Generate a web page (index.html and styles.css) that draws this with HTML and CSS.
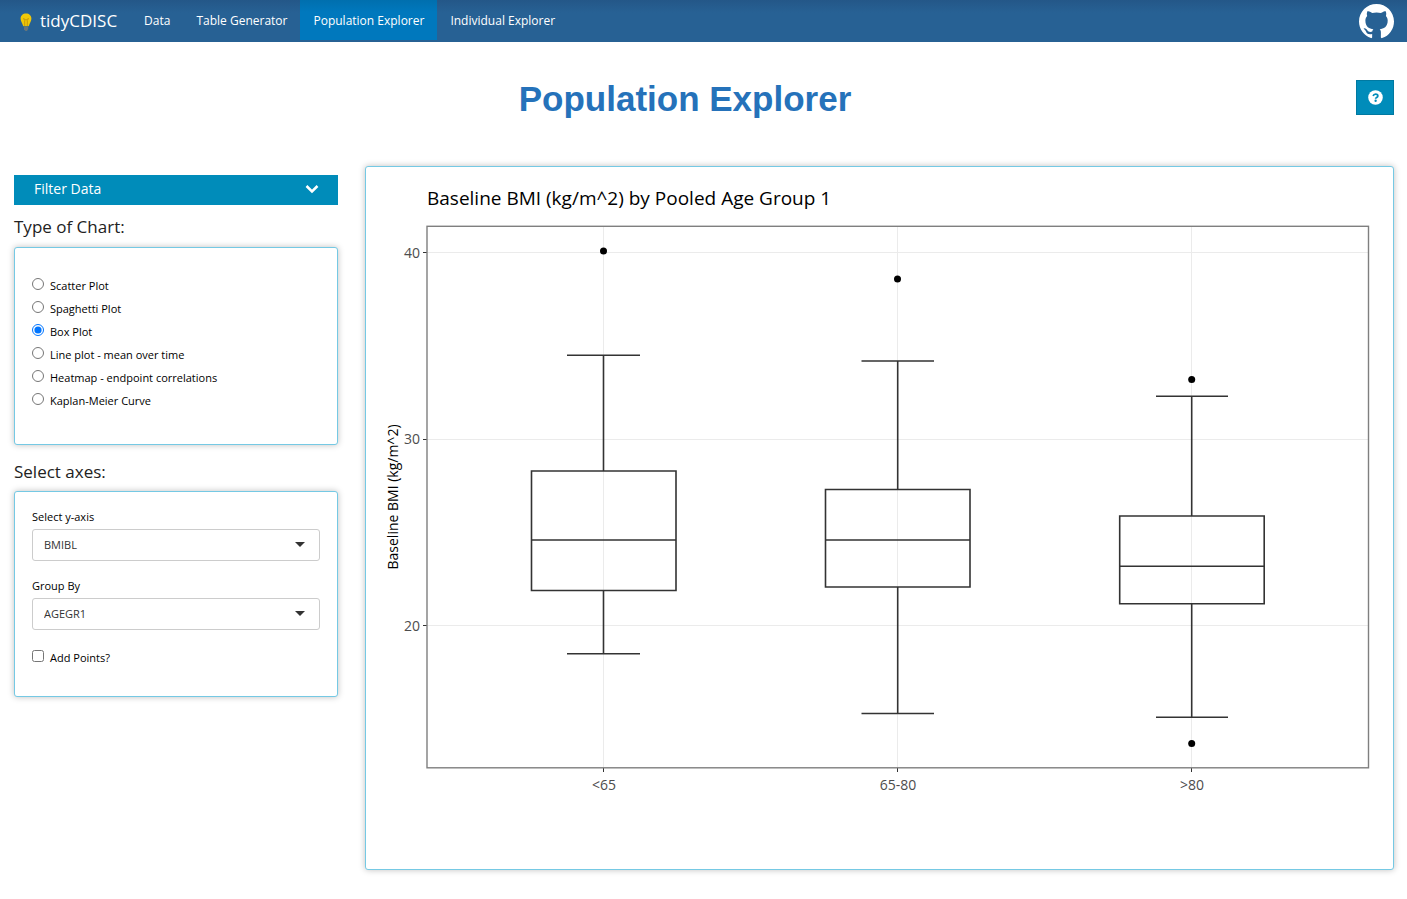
FILE: index.html
```html
<!DOCTYPE html>
<html lang="en">
<head>
<meta charset="utf-8">
<meta name="viewport" content="width=device-width, initial-scale=1">
<title>tidyCDISC</title>
<link rel="stylesheet" href="styles.css">
</head>
<body>
<nav class="navbar">
  <a class="brand" href="#">
    <svg class="brand-icon" viewBox="0 0 12 19" aria-hidden="true">
      <path d="M6 .5C2.800.5.600 2.600.600 5.600c0 2.700 1.400 3.900 2.100 6.200.2.900.5 1.500 1.200 1.500h4.200c.7 0 1-.6 1.200-1.500.7-2.300 2.100-3.500 2.100-6.200C11.400 2.600 9.200.5 6 .5z" fill="#f0c808"/>
      <path d="M4.700 13V7.500L3.500 5.500 6 7l2.500-1.500-1.200 2V13" fill="none" stroke="#c99a08" stroke-width="1"/>
      <path d="M4 14h4.200v2L7 18H5.500L4 16.400z" fill="#65757c"/>
    </svg>
    <span>tidyCDISC</span>
  </a>
  <a class="nav-link" href="#">Data</a>
  <a class="nav-link" href="#">Table Generator</a>
  <a class="nav-link active" href="#" aria-current="page">Population Explorer</a>
  <a class="nav-link" href="#">Individual Explorer</a>
  <a class="github" href="#" aria-label="GitHub">
    <svg viewBox="0 0 16 16" aria-hidden="true"><path fill="#fff" d="M8 0C3.580 0 0 3.580 0 8c0 3.540 2.290 6.530 5.470 7.590.4.070.55-.17.55-.38 0-.19-.01-.82-.01-1.490-2.010.37-2.530-.49-2.690-.94-.09-.23-.48-.94-.82-1.130-.28-.15-.68-.52-.01-.53.63-.01 1.080.58 1.230.82.72 1.210 1.870.87 2.330.66.07-.52.28-.87.51-1.070-1.780-.2-3.640-.89-3.640-3.950 0-.87.31-1.590.82-2.150-.08-.2-.36-1.020.08-2.120 0 0 .67-.21 2.200.82.64-.18 1.320-.27 2-.27s1.360.09 2 .27c1.530-1.040 2.200-.82 2.200-.82.44 1.100.16 1.920.08 2.120.51.56.82 1.270.82 2.150 0 3.070-1.870 3.750-3.650 3.950.29.25.54.73.54 1.480 0 1.070-.01 1.930-.01 2.200 0 .21.15.46.55.38A8.010 8.010 0 0 0 16 8c0-4.420-3.580-8-8-8z"/></svg>
  </a>
</nav>

<header class="page-header">
  <h1>Population Explorer</h1>
  <button class="help" type="button" aria-label="Help">
    <svg viewBox="0 0 512 512" aria-hidden="true"><circle cx="256" cy="256" r="248" fill="#fff"/><path d="M174 203c14-42 43-65 86-65 44 0 76 25 76 64 0 52-76 48-76 97" fill="none" stroke="#008cba" stroke-width="60"/><circle cx="260" cy="366" r="40" fill="#008cba"/></svg>
  </button>
</header>

<main class="layout">
  <aside class="sidebar">
    <button class="filter" type="button">
      <span>Filter Data</span>
      <svg viewBox="0 0 14 10" aria-hidden="true"><path d="M1.500 2 7 7.500 12.500 2" fill="none" stroke="#fff" stroke-width="2.500"/></svg>
    </button>

    <h2 id="chart-type">Type of Chart:</h2>
    <div class="panel chart-types" role="radiogroup" aria-labelledby="chart-type">
      <label class="option"><input type="radio" name="chart"><span>Scatter Plot</span></label>
      <label class="option"><input type="radio" name="chart"><span>Spaghetti Plot</span></label>
      <label class="option"><input type="radio" name="chart" checked><span>Box Plot</span></label>
      <label class="option"><input type="radio" name="chart"><span>Line plot - mean over time</span></label>
      <label class="option"><input type="radio" name="chart"><span>Heatmap - endpoint correlations</span></label>
      <label class="option"><input type="radio" name="chart"><span>Kaplan-Meier Curve</span></label>
    </div>

    <h2>Select axes:</h2>
    <div class="panel axes">
      <div class="field">
        <label for="y-axis">Select y-axis</label>
        <div class="select"><select id="y-axis"><option>BMIBL</option></select></div>
      </div>
      <div class="field">
        <label for="group-by">Group By</label>
        <div class="select"><select id="group-by"><option>AGEGR1</option></select></div>
      </div>
      <label class="option"><input type="checkbox"><span>Add Points?</span></label>
    </div>
  </aside>

  <section class="panel plot">
    <svg class="chart" viewBox="0 0 1027 702" role="img" aria-label="Baseline BMI (kg/m^2) by Pooled Age Group 1">
      <text class="chart-title" x="61" y="38">Baseline BMI (kg/m^2) by Pooled Age Group 1</text>
      <path class="grid" d="M61 85.500H1002M61 272.500H1002M61 458.500H1002M237.500 59V601M531.500 59V601M825.500 59V601"/>
      <path class="ticks" d="M57 85.500H61M57 272.500H61M57 458.500H61M237.500 601v4M531.500 601v4M825.500 601v4"/>
      <g class="box">
        <path d="M237.500 188V304M237.500 423.500V487M201 188.300H274M201 486.800H274"/>
        <path d="M165.500 304H310V423.500H165.500zM165.500 373H310"/>
        <path d="M531.700 194V322.500M531.700 420V546.500M495.500 194H568M495.500 546.500H568"/>
        <path d="M459.500 322.500H604V420H459.500zM459.500 373H604"/>
        <path d="M825.700 229.300V349M825.700 436.700V550.200M790 229.300H862M790 550.200H862"/>
        <path d="M753.700 349H898.200V436.700H753.700zM753.700 399.300H898.200"/>
      </g>
      <g class="outliers">
        <circle cx="237.500" cy="84" r="3.500"/>
        <circle cx="531.500" cy="112" r="3.500"/>
        <circle cx="825.700" cy="212.500" r="3.500"/>
        <circle cx="825.700" cy="576.500" r="3.500"/>
      </g>
      <rect class="frame" x="61" y="59.300" width="941.500" height="541.500"/>
      <g class="tick-labels end">
        <text x="54" y="91">40</text>
        <text x="54" y="277">30</text>
        <text x="54" y="464">20</text>
      </g>
      <g class="tick-labels middle">
        <text x="238" y="623">&lt;65</text>
        <text x="532" y="623">65-80</text>
        <text x="826" y="623">&gt;80</text>
      </g>
      <text class="axis-title" transform="translate(32 330) rotate(-90)">Baseline BMI (kg/m^2)</text>
    </svg>
  </section>
</main>
</body>
</html>
```
FILE: styles.css
```css
* { box-sizing: border-box; }

body {
  margin: 0;
  background: #fff;
  color: #000;
  font-family: "Open Sans", sans-serif;
  font-size: 11px;
}

.navbar {
  display: flex;
  align-items: flex-start;
  height: 42px;
  padding: 0 13px 0 20px;
  background: linear-gradient(#245788, #276194 30%);
}

.brand, .nav-link {
  display: flex;
  align-items: center;
  height: 40px;
  color: #fff;
  text-decoration: none;
}

.brand { gap: 8px; padding-right: 14px; font-size: 17px; }
.brand-icon { width: 12px; height: 19px; margin-top: 4px; }
.nav-link { padding: 0 13px; font-size: 12px; }
.nav-link.active { background: linear-gradient(#006fae, #0078bd 30%); }

.github { margin: 4px 0 0 auto; }
.github svg { display: block; width: 35px; height: 35px; }

.page-header {
  display: flex;
  align-items: flex-start;
  padding: 38px 13px 0 14px;
}

h1 {
  flex: 1;
  margin: 0;
  color: #2572ba;
  font: bold 35px/38px "Liberation Sans", Arial, sans-serif;
  text-align: center;
}

.help {
  display: grid;
  place-items: center;
  width: 38px;
  height: 35px;
  padding: 0;
  border: 1px solid #0079a1;
  background: #008cba;
}
.help svg { width: 15px; height: 15px; }

.layout {
  display: grid;
  grid-template-columns: 324fr 1029fr;
  align-items: start;
  gap: 27px;
  padding: 48px 13px 24px 14px;
}

.sidebar { padding-top: 9px; }

.filter {
  display: flex;
  align-items: center;
  justify-content: space-between;
  width: 100%;
  height: 30px;
  padding: 0 19px 3px 20px;
  border: 0;
  background: #008cba;
  color: #fff;
  font: 14px "Open Sans", sans-serif;
}
.filter svg { width: 14px; height: 10px; }

h2 {
  margin: 10px 0 8px;
  color: #222;
  font-size: 17px;
  font-weight: 400;
  line-height: 24px;
}

.panel {
  border: 1px solid #75c9e4;
  border-radius: 3px;
  background: #fff;
  box-shadow: 0 0 6px rgba(0, 0, 0, .25);
}

.chart-types {
  display: grid;
  grid-auto-rows: 20px;
  row-gap: 3px;
  padding: 27px 17px 34px;
}

.option { display: flex; align-items: center; gap: 6px; }
.option input { width: 12px; height: 12px; margin: 0 0 3px; }

.panel + h2 { margin: 15px 0 7px; }

.axes { padding: 17px 17px 29px; }
.field { margin-bottom: 17px; }
.field label { display: block; margin-bottom: 4px; line-height: 16px; }

.select { position: relative; }
.select::after {
  position: absolute;
  top: 13px;
  right: 15px;
  border: 5px solid transparent;
  border-top-color: #333;
  border-bottom: 0;
  content: "";
  pointer-events: none;
}
.select select {
  display: block;
  width: 100%;
  height: 32px;
  padding: 0 30px 2px 11px;
  border: 1px solid #ccc;
  border-radius: 3px;
  background: #fff;
  color: #333;
  font: 11px "Open Sans", sans-serif;
  appearance: none;
}

.axes .option { height: 20px; }

.chart { display: block; width: 100%; height: auto; }
.chart-title { font-size: 19px; }
.axis-title { font-size: 14px; text-anchor: middle; }
.tick-labels { fill: #4d4d4d; font-size: 14px; }
.end { text-anchor: end; }
.middle { text-anchor: middle; }
.grid { stroke: #ebebeb; }
.ticks { stroke: #333; }
.box { fill: none; stroke: #333; stroke-width: 1.6; }
.frame { fill: none; stroke: #7f7f7f; stroke-width: 1.4; }
```
